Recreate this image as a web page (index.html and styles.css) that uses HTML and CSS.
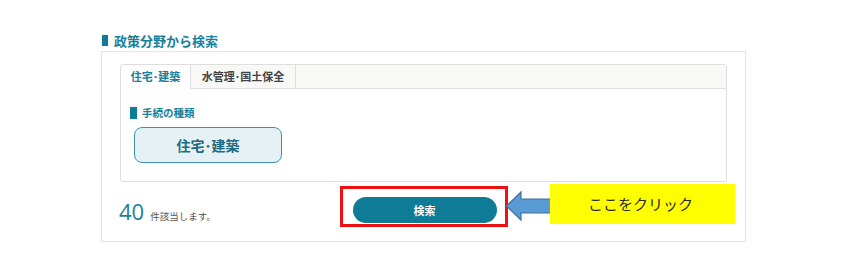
FILE: index.html
```html
<!DOCTYPE html>
<html lang="ja">
<head>
<meta charset="utf-8">
<link rel="stylesheet" href="styles.css">
</head>
<body>
<div class="page">
  <h2 class="title"><span class="mark"></span>政策分野から検索</h2>
  <div class="panel">
    <div class="tabbox">
      <div class="tabs">
        <div class="tab active">住宅･建築</div>
        <div class="tab">水管理･国土保全</div>
      </div>
      <div class="tabbody">
        <div class="label"><span class="mark small"></span>手続の種類</div>
        <button class="cat">住宅･建築</button>
      </div>
    </div>
    <div class="footer">
      <div class="count"><span class="num">40</span><span class="unit">件該当します。</span></div>
      <div class="center">
        <div class="redbox"><button class="search">検索</button></div>
      </div>
      <div></div>
      <svg class="arrow" width="48" height="32" viewBox="0 0 48 32">
        <path d="M1.5 16 L16 2 L16 9 L47 9 L47 23 L16 23 L16 30 Z" fill="#5b9bd5" stroke="#41719c" stroke-width="1.2"/>
      </svg>
      <div class="note">ここをクリック</div>
    </div>
  </div>
</div>
</body>
</html>
```

FILE: styles.css
```css
* { box-sizing: border-box; }
body {
  margin: 0;
  background: #fff;
  font-family: "Noto Sans CJK JP", "Noto Sans", sans-serif;
}
.page {
  padding: 33px 0 0 101px;
}
.title {
  margin: 0 0 3px 1px;
  height: 15px;
  display: flex;
  align-items: center;
  gap: 6px;
  font-size: 13px;
  font-weight: 700;
  color: #17809a;
  line-height: 15px;
}
.mark {
  display: inline-block;
  width: 6px;
  height: 11px;
  background: #0e7c96;
}
.panel {
  width: 645px;
  border: 1px solid #e4e4e4;
  padding: 12px 18px 0 18px;
}
.tabbox {
  border: 1px solid #dedede;
  border-radius: 3px;
  height: 118px;
  overflow: hidden;
}
.tabs {
  display: flex;
  height: 24px;
  background: #f8f8f7;
  border-bottom: 1px solid #dedede;
}
.tab {
  font-size: 11px;
  font-weight: 700;
  color: #444;
  line-height: 23px;
  text-align: center;
  border-right: 1px solid #dedede;
}
.tab:first-child { width: 70px; }
.tab:nth-child(2) { width: 105px; }
.tab.active {
  background: #fff;
  color: #17809a;
  height: 24px;
}
.tabbody {
  padding: 18px 0 0 9px;
}
.label {
  display: flex;
  align-items: center;
  gap: 5px;
  font-size: 10.5px;
  font-weight: 700;
  color: #17809a;
  height: 12px;
  line-height: 12px;
}
.mark.small {
  width: 7px;
  height: 12px;
}
.cat {
  display: block;
  margin: 8px 0 0 4px;
  width: 148px;
  height: 36px;
  border: 1.5px solid #3b93a8;
  border-radius: 8px;
  background: #e5f1f5;
  color: #1d6b80;
  font-family: inherit;
  font-size: 14px;
  font-weight: 700;
  padding: 0;
}
.footer {
  position: relative;
  display: grid;
  grid-template-columns: 1fr auto 1fr;
  align-items: end;
  height: 59px;
  margin: 0 -18px;
  padding: 4px 18px 14px 18px;
}
.count {
  display: flex;
  align-items: baseline;
  gap: 6px;
  padding-bottom: 4px;
  margin-left: -1px;
}
.num {
  font-family: "Open Sans", sans-serif;
  font-size: 22px;
  color: #1b7f9a;
  line-height: 22px;
}
.unit {
  font-size: 9.5px;
  color: #555;
}
.center {
  display: flex;
  justify-content: center;
}
.redbox {
  border: 3px solid #ee1111;
  padding: 8px 8px 2px 10px;
  height: 41px;
}
.search {
  display: block;
  width: 144px;
  height: 26px;
  border: none;
  border-radius: 13px;
  background: #0e7c96;
  color: #fff;
  font-family: inherit;
  font-size: 11px;
  font-weight: 700;
  padding: 0;
}
.arrow {
  position: absolute;
  left: 403px;
  top: 8px;
}
.note {
  position: absolute;
  left: 448px;
  top: 2px;
  width: 185px;
  height: 40px;
  background: #ffff00;
  color: #2a2a2a;
  font-size: 15px;
  line-height: 40px;
  padding-left: 38px;
}
```
